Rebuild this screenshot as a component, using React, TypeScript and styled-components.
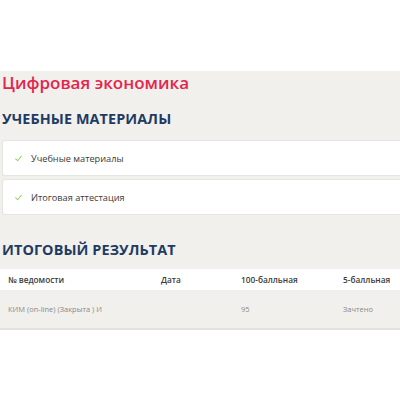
import React from "react";
import styled, { createGlobalStyle } from "styled-components";

const Global = createGlobalStyle`
  html, body { margin: 0; padding: 0; background: #ffffff; }
  body { font-family: "Open Sans", "Noto Sans", sans-serif; }
`;

const Page = styled.div`
  width: 400px;
  height: 400px;
  background: #ffffff;
  padding-top: 71px;
  box-sizing: border-box;
  overflow: hidden;
`;

const Panel = styled.div`
  background: #f1f0ec;
  padding: 0 0 0 2px;
  display: flex;
  flex-direction: column;
`;

const Title = styled.h1`
  margin: 0;
  color: #e3264d;
  font-size: 17px;
  font-weight: 600;
  line-height: 24px;
`;

const Section = styled.h2<{ $top: number }>`
  margin: ${(p) => p.$top}px 0 0 0;
  color: #1f3b63;
  font-size: 14.4px;
  font-weight: 700;
  line-height: 22px;
  letter-spacing: 0.1px;
`;

const List = styled.div`
  margin-top: 10px;
  display: flex;
  flex-direction: column;
  gap: 3px;
`;

const Card = styled.div`
  height: 36px;
  background: #ffffff;
  border: 1px solid #e6e5e2;
  border-right: none;
  border-radius: 3px 0 0 3px;
  display: flex;
  align-items: center;
  padding-left: 12px;
  gap: 9px;
  box-sizing: border-box;
  font-size: 9.2px;
  color: #3a3a3a;
`;

const Check = styled.svg`
  width: 7px;
  height: 7px;
  flex: none;
`;

const Table = styled.div`
  margin-top: 8px;
  margin-left: -2px;
  display: flex;
  flex-direction: column;
`;

const Row = styled.div<{ $head?: boolean }>`
  display: grid;
  grid-template-columns: 153px 80px 102px 1fr;
  align-items: center;
  height: ${(p) => (p.$head ? 21 : 38)}px;
  padding-left: 8px;
  background: ${(p) => (p.$head ? "#ffffff" : "#f1f0ec")};
  border-bottom: ${(p) => (p.$head ? "none" : "2px solid #e3e2df")};
  font-size: ${(p) => (p.$head ? 8.3 : 7.5)}px;
  font-weight: ${(p) => (p.$head ? 600 : 400)};
  color: ${(p) => (p.$head ? "#3c3c3c" : "#8a8a8a")};
  white-space: nowrap;
`;

const CheckIcon = () => (
  <Check viewBox="0 0 10 10">
    <path d="M1 5.5 L3.8 8.2 L9 1.8" fill="none" stroke="#9ccc65" strokeWidth="1.5" strokeLinecap="round" strokeLinejoin="round" />
  </Check>
);

export default function App() {
  return (
    <>
      <Global />
      <Page>
        <Panel>
          <Title>Цифровая экономика</Title>
          <Section $top={13}>УЧЕБНЫЕ МАТЕРИАЛЫ</Section>
          <List>
            <Card>
              <CheckIcon />
              Учебные материалы
            </Card>
            <Card>
              <CheckIcon />
              Итоговая аттестация
            </Card>
          </List>
          <Section $top={24}>ИТОГОВЫЙ РЕЗУЛЬТАТ</Section>
          <Table>
            <Row $head>
              <span>№ ведомости</span>
              <span>Дата</span>
              <span>100-балльная</span>
              <span>5-балльная</span>
            </Row>
            <Row>
              <span>КИМ (on-line) (Закрыта ) И</span>
              <span></span>
              <span>95</span>
              <span>Зачтено</span>
            </Row>
          </Table>
        </Panel>
      </Page>
    </>
  );
}
